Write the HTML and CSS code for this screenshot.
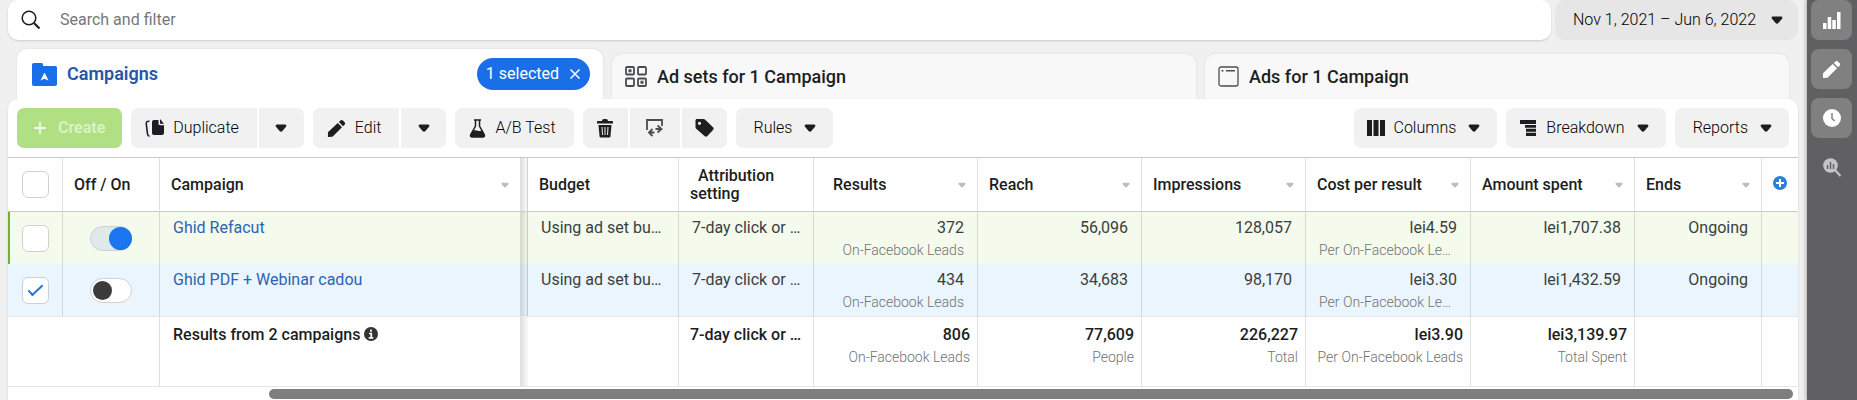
FILE: index.html
```
<!DOCTYPE html>
<html lang="en">
<head>
  <meta charset="UTF-8">
  <meta name="viewport" content="width=device-width, initial-scale=1.0">
  <title>Ads Manager - Campaigns</title>
  <link rel="stylesheet" href="styles.css">
</head>
<body>
  <!-- shared icons -->
  <svg class="sprite" aria-hidden="true">
    <symbol id="caret" viewBox="0 0 12 8"><path d="M2 0.5h8c1.3 0 1.8 1.2 1 2.2L7.4 7c-.8.9-2 .9-2.8 0L1 2.700C.2 1.700.7.5 2 .5z"/></symbol>
    <symbol id="pencil" viewBox="0 0 20 20"><path d="M1 19v-4.300c0-.5.2-.9.5-1.200L11.300 4.300l4.500 4.500-9.500 9.400c-.4.400-.8.600-1.300.6zM12.500 3.200l1.600-1.600c.8-.8 1.900-.8 2.700 0l1.700 1.700c.8.8.8 1.900 0 2.700l-1.600 1.600z"/></symbol>
  </svg>

  <div class="main">
    <div class="topbar">
      <label class="search">
        <svg width="20" height="20" viewBox="0 0 20 20" fill="none" stroke="#1c1e21" stroke-width="1.500"><circle cx="8" cy="8" r="6.800"/><path d="M13 13l5.500 5.500" stroke-width="2.200"/></svg>
        <input type="text" placeholder="Search and filter" aria-label="Search and filter">
      </label>
      <button class="date">Nov 1, 2021 – Jun 6, 2022 <svg class="caret"><use href="#caret"/></svg></button>
    </div>

    <div class="tabs">
      <div class="tab active">
        <svg width="25" height="23" viewBox="0 0 25 23"><path d="M2 0h7c1.500 0 2 .5 2 1.500V3h12c1.300 0 2 .7 2 2v16c0 1.300-.7 2-2 2H2c-1.300 0-2-.7-2-2V2C0 .7.700 0 2 0z" fill="#1a6fe8"/><path d="M12.500 9.500l4 8-4-1.700-4 1.700z" fill="#fff"/></svg>
        <a href="#campaigns">Campaigns</a>
        <button class="pill">1 selected <svg width="10" height="10" viewBox="0 0 10 10" stroke="#fff" stroke-width="1.500"><path d="M.5.5l9 9M9.500.5l-9 9"/></svg></button>
      </div>
      <div class="tab">
        <svg width="22" height="21" viewBox="0 0 22 21" fill="none" stroke="#4b4c4f" stroke-width="1.800"><rect x="1" y="1" width="8" height="7.500" rx="1"/><rect x="13" y="1" width="8" height="7.500" rx="1"/><rect x="1" y="12.500" width="8" height="7.500" rx="1"/><rect x="13" y="12.500" width="8" height="7.500" rx="1"/><path d="M3.500 4.800h3M15.500 16.300h3" stroke-width="3"/></svg>
        <a href="#adsets">Ad sets for 1 Campaign</a>
      </div>
      <div class="tab">
        <svg width="21" height="21" viewBox="0 0 21 21" fill="none" stroke="#4b4c4f" stroke-width="1.300"><rect x="1" y="1" width="19" height="19" rx="2"/><path d="M3.500 4.800h2M8 4.800h9" stroke-width="1.500"/></svg>
        <a href="#ads">Ads for 1 Campaign</a>
      </div>
    </div>

    <div class="panel">
      <div class="toolbar">
        <button class="create"><svg width="12" height="12" viewBox="0 0 12 12" stroke="#f0fae4" stroke-width="1.800"><path d="M6 0v12M0 6h12"/></svg>Create</button>
        <div class="group">
          <button class="btn">
            <svg width="19" height="18" viewBox="0 0 19 18"><path d="M9 1h4.500v3.500c0 1.200.5 1.700 1.700 1.700H19V14c0 1.200-.8 2-2 2H9c-1.200 0-2-.8-2-2V3c0-1.200.8-2 2-2zM15 0l4 4.700h-4z"/><path d="M4.500 2.200C2 2 1 3 1.300 5l1.200 10c.1 1.300.7 2 2 2.200" fill="none" stroke="#1c1e21" stroke-width="1.600"/></svg>
            Duplicate
          </button>
          <button class="btn only-icon" aria-label="More duplicate options"><svg class="caret"><use href="#caret"/></svg></button>
        </div>
        <div class="group">
          <button class="btn"><svg width="19" height="19"><use href="#pencil"/></svg>Edit</button>
          <button class="btn only-icon" aria-label="More edit options"><svg class="caret"><use href="#caret"/></svg></button>
        </div>
        <button class="btn">
          <svg width="17" height="19" viewBox="0 0 17 19"><path d="M5 1h7M6.500 1v6L1.800 15.500c-.6 1.400 0 2.500 1.400 2.500h10.600c1.400 0 2-1.100 1.400-2.500L10.500 7V1" fill="none" stroke="#1c1e21" stroke-width="1.500"/><path d="M4 11.500c3-1 4 1.500 9 0l3 5c0 1-.6 1.500-1.500 1.500h-12C1 18 1 17 1.400 16z"/></svg>
          A/B Test
        </button>
        <div class="group">
          <button class="btn only-icon" aria-label="Delete"><svg width="16" height="19" viewBox="0 0 16 19"><path d="M5 2c0-1.200.8-2 2-2h2c1.200 0 2 .8 2 2h4c.6 0 1 .4 1 1v1.500H0V3c0-.6.400-1 1-1z"/><path d="M1.500 6h13L13.500 17c-.1 1-.7 1.500-1.700 1.500H4.200c-1 0-1.600-.5-1.700-1.500z"/><path d="M5 8l.5 8M8 8v8M11 8l-.5 8" stroke="#f1f1f1" stroke-width="1"/></svg></button>
          <button class="btn only-icon wide" aria-label="Revert"><svg width="17" height="18" viewBox="0 0 17 18" fill="none" stroke="#4b4c4f" stroke-width="1.800"><path d="M1 11V1h15v6M11.500 6.500L15.500 10l-4 3.500M14.500 10H9.500M6.500 10L3 13.500 6.500 17M3.500 13.500h5"/></svg></button>
          <button class="btn only-icon" aria-label="Tag"><svg width="19" height="18" viewBox="0 0 19 18"><path fill-rule="evenodd" d="M2 0h6.500c.7 0 1.200.2 1.700.7l7.800 7.600c.9.900.9 1.900 0 2.800l-5.600 5.900c-.9.900-2 .9-2.900 0L1.200 9.700C.8 9.200.5 8.700.5 8V1.500C.5.600 1.100 0 2 0zM4.500 2.700a1.600 1.600 0 1 0 0 3.200 1.600 1.600 0 0 0 0-3.200z"/></svg></button>
        </div>
        <button class="btn menu">Rules <svg class="caret"><use href="#caret"/></svg></button>

        <div class="right">
          <button class="btn"><svg width="18" height="16" viewBox="0 0 18 16"><path d="M0 0h5v16H0zM6.500 0h5v16h-5zM13 0h5v16h-5z"/></svg>Columns <svg class="caret"><use href="#caret"/></svg></button>
          <button class="btn"><svg width="18" height="16" viewBox="0 0 18 16"><path d="M1 0h16v4H1zM6 5h11v2.700H6zM7 8.700h10v3H7zM7 12.700h10V16H7z"/></svg>Breakdown <svg class="caret"><use href="#caret"/></svg></button>
          <button class="btn menu">Reports <svg class="caret"><use href="#caret"/></svg></button>
        </div>
      </div>

      <table>
        <colgroup>
          <col class="c-check"><col class="c-toggle"><col><col class="c-gutter"><col class="c-budget"><col class="c-attr">
          <col class="c-num"><col class="c-num"><col class="c-num"><col class="c-cost"><col class="c-num"><col class="c-ends"><col class="c-add">
        </colgroup>
        <thead>
          <tr>
            <th><input type="checkbox" class="check" aria-label="Select all"></th>
            <th>Off / On</th>
            <th><div class="head">Campaign <svg><use href="#caret"/></svg></div></th>
            <th class="gutter"></th>
            <th>Budget</th>
            <th class="indent">Attribution setting</th>
            <th class="indent"><div class="head">Results <svg><use href="#caret"/></svg></div></th>
            <th><div class="head">Reach <svg><use href="#caret"/></svg></div></th>
            <th><div class="head">Impressions <svg><use href="#caret"/></svg></div></th>
            <th><div class="head">Cost per result <svg><use href="#caret"/></svg></div></th>
            <th><div class="head">Amount spent <svg><use href="#caret"/></svg></div></th>
            <th><div class="head">Ends <svg><use href="#caret"/></svg></div></th>
            <th class="add"><button aria-label="Add column"><svg width="14" height="14" viewBox="0 0 14 14"><circle cx="7" cy="7" r="7" fill="#2d7fd8"/><path d="M7 3v8M3 7h8" stroke="#fff" stroke-width="2"/></svg></button></th>
          </tr>
        </thead>
        <tbody>
          <tr class="green">
            <td class="mid"><input type="checkbox" class="check" aria-label="Select Ghid Refacut"></td>
            <td class="mid"><input type="checkbox" role="switch" class="toggle" checked aria-label="Ghid Refacut on"></td>
            <td><a href="#refacut">Ghid Refacut</a></td>
            <td class="gutter"></td>
            <td>Using ad set bu…</td>
            <td>7-day click or …</td>
            <td class="num">372<small>On-Facebook Leads</small></td>
            <td class="num">56,096</td>
            <td class="num">128,057</td>
            <td class="num">lei4.59<small class="cut">Per On-Facebook Le…</small></td>
            <td class="num">lei1,707.38</td>
            <td class="num">Ongoing</td>
            <td></td>
          </tr>
          <tr class="blue">
            <td class="mid"><input type="checkbox" class="check" checked aria-label="Select Ghid PDF + Webinar cadou"></td>
            <td class="mid"><input type="checkbox" role="switch" class="toggle" aria-label="Ghid PDF + Webinar cadou on"></td>
            <td><a href="#webinar">Ghid PDF + Webinar cadou</a></td>
            <td class="gutter"></td>
            <td>Using ad set bu…</td>
            <td>7-day click or …</td>
            <td class="num">434<small>On-Facebook Leads</small></td>
            <td class="num">34,683</td>
            <td class="num">98,170</td>
            <td class="num">lei3.30<small class="cut">Per On-Facebook Le…</small></td>
            <td class="num">lei1,432.59</td>
            <td class="num">Ongoing</td>
            <td></td>
          </tr>
        </tbody>
        <tfoot>
          <tr>
            <td colspan="2"></td>
            <td class="total-name">Results from 2 campaigns <svg width="14" height="14" viewBox="0 0 14 14"><circle cx="7" cy="7" r="7" fill="#333"/><path d="M7 2.500v2.300M5 6.500h2.300v4M4.700 10.800h4.600" stroke="#fff" stroke-width="1.700" fill="none"/></svg></td>
            <td class="gutter"></td>
            <td></td>
            <td>7-day click or …</td>
            <td class="num">806<small>On-Facebook Leads</small></td>
            <td class="num">77,609<small>People</small></td>
            <td class="num">226,227<small>Total</small></td>
            <td class="num">lei3.90<small>Per On-Facebook Leads</small></td>
            <td class="num">lei3,139.97<small>Total Spent</small></td>
            <td></td>
            <td></td>
          </tr>
        </tfoot>
      </table>
      <div class="scroll"></div>
    </div>
  </div>

  <div class="sidebar">
    <button aria-label="Charts"><svg width="18" height="17" viewBox="0 0 18 17"><path d="M0 11h3.500v6H0zM4.700 5h3.500v12H4.700zM9.300 8h3.500v9H9.300zM14 0h3.500v17H14z"/></svg></button>
    <button aria-label="Edit"><svg width="19" height="19"><use href="#pencil"/></svg></button>
    <button aria-label="History"><svg width="18" height="18" viewBox="0 0 18 18"><circle cx="9" cy="9" r="9"/><path d="M9 4v5.500l2.500 2.500" fill="none" stroke="#808080" stroke-width="1.500"/></svg></button>
    <button class="plain" aria-label="Inspect"><svg width="18" height="19" viewBox="0 0 18 19"><circle cx="7.500" cy="7.500" r="7.300"/><path d="M12 12l5.500 6" stroke="#c4c4c6" stroke-width="2.200"/><path d="M4.500 7v4M7.500 4v7M10.500 6v5" stroke="#606062" stroke-width="1.400"/></svg></button>
  </div>
</body>
</html>
```
FILE: styles.css
```
* {
  box-sizing: border-box;
}

body {
  margin: 0;
  min-height: 100vh;
  display: flex;
  background: #f0f0f0;
  font-family: Roboto, "Liberation Sans", sans-serif;
  font-size: 16px;
  line-height: 20px;
  color: #1c1e21;
}

button, input {
  font: inherit;
  color: inherit;
  margin: 0;
}

button {
  border: none;
  padding: 0;
  cursor: pointer;
}

a {
  text-decoration: none;
}

svg {
  flex: none;
}

.sprite {
  position: absolute;
  width: 0;
  height: 0;
}

.caret {
  width: 12px;
  height: 8px;
  margin-left: 3px;
}

.main {
  flex: 1;
  min-width: 0;
  display: flex;
  flex-direction: column;
  padding: 0 9px 0 8px;
}

/* search + date */
.topbar {
  display: flex;
  gap: 4px;
  height: 40px;
}

.search {
  flex: 1;
  display: flex;
  align-items: center;
  gap: 19px;
  padding: 0 13px;
  background: #fff;
  border-radius: 10px;
  box-shadow: 0 1px 2px rgba(0, 0, 0, 0.15);
}

.search input {
  flex: 1;
  border: none;
  outline: none;
  padding: 0;
  background: none;
}

.search input::placeholder {
  color: #75777a;
  opacity: 1;
}

.date {
  display: flex;
  align-items: center;
  justify-content: space-between;
  width: 243px;
  padding: 0 15px 0 18px;
  background: #e6e6e6;
  border-radius: 10px;
  color: #000;
  fill: #1c1e21;
  font-weight: 300;
}

/* tabs */
.tabs {
  display: flex;
  align-items: flex-end;
  gap: 9px;
  padding: 9px 9px 0;
}

.tab {
  flex: 1;
  display: flex;
  align-items: center;
  gap: 10px;
  height: 45px;
  padding: 0 13px;
  background: #f8f8f8;
  border-radius: 10px 10px 0 0;
  box-shadow: 0 0 2px rgba(0, 0, 0, 0.12);
  font-size: 18px;
  font-weight: 500;
}

.tab a {
  color: inherit;
}

.tab.active {
  height: 50px;
  background: #fff;
  color: #2457a8;
  padding-left: 15px;
  font-weight: 600;
}

.pill {
  display: flex;
  align-items: center;
  gap: 11px;
  height: 32px;
  margin-left: auto;
  padding: 0 10px 0 9px;
  background: #1a6fe8;
  color: #fff;
  border-radius: 16px;
  font-size: 16px;
  font-weight: 400;
}

/* white panel */
.panel {
  flex: 1;
  background: #fff;
  border-radius: 10px 10px 0 0;
  box-shadow: 0 1px 2px rgba(0, 0, 0, 0.15);
}

.toolbar {
  display: flex;
  gap: 9px;
  padding: 9px;
}

.group {
  display: flex;
  gap: 2px;
}

.right {
  display: flex;
  gap: 9px;
  margin-left: auto;
}

.create, .btn {
  display: flex;
  align-items: center;
  gap: 9px;
  height: 40px;
  padding: 0 18px 0 14px;
  border-radius: 7px;
  background: #f1f1f1;
  color: #000;
  fill: #1c1e21;
  font-weight: 300;
  white-space: nowrap;
}

.create {
  gap: 12px;
  padding: 0 17px;
  background: #b0e083;
  color: #dcf3c5;
  font-weight: 600;
}

.right .btn {
  padding: 0 17px 0 13px;
}

.toolbar .menu {
  padding: 0 17px 0 18px;
}

.btn.only-icon {
  justify-content: center;
  width: 45px;
  padding: 0;
}

.btn.only-icon.wide {
  width: 50px;
}

.only-icon .caret {
  margin: 0;
}

.group .btn {
  border-radius: 0;
}

.group .btn:first-child {
  border-radius: 7px 0 0 7px;
}

.group .btn:last-child {
  border-radius: 0 7px 7px 0;
}

/* table */
table {
  width: 100%;
  table-layout: fixed;
  border-collapse: separate;
  border-spacing: 0;
  border-top: 1px solid #c8c8c8;
}

.c-check { width: 55px; }
.c-toggle { width: 97px; }
.c-gutter { width: 7px; }
.c-budget { width: 151px; }
.c-attr { width: 135px; }
.c-num { width: 164px; }
.c-cost { width: 165px; }
.c-ends { width: 127px; }
.c-add { width: 36px; }

th, td {
  border-right: 1px solid rgba(0, 0, 0, 0.12);
  text-align: left;
  white-space: nowrap;
}

th:last-child, td:last-child {
  border-right: none;
}

th {
  height: 54px;
  padding: 0 11px;
  border-bottom: 1px solid #c8c8c8;
  font-weight: 500;
  line-height: 18px;
  white-space: normal;
}

th:first-child {
  text-align: center;
}

th.indent {
  text-indent: 8px;
}

.head {
  display: flex;
  align-items: center;
  justify-content: space-between;
  white-space: nowrap;
}

.head svg {
  width: 8px;
  height: 6px;
  fill: #bdbdbd;
}

th.add {
  padding: 0;
  text-align: center;
}

.add button {
  background: none;
}

td {
  height: 52px;
  padding: 6px 13px 0;
  vertical-align: top;
  color: #3b3e40;
}

td a {
  color: #2c63b5;
}

td.num {
  text-align: right;
}

td.mid {
  padding: 0;
  vertical-align: middle;
  text-align: center;
}

th.gutter, td.gutter {
  padding: 0;
  border-right-color: rgba(0, 0, 0, 0.08);
  background: linear-gradient(to right, rgba(0, 0, 0, 0.12), rgba(0, 0, 0, 0.02));
}

small {
  display: block;
  margin-top: 2px;
  font-size: 14px;
  font-weight: 300;
  color: #6f7274;
}

small.cut {
  text-align: left;
}

.green {
  background: #f4faec;
}

.green td:first-child {
  box-shadow: inset 2px 0 #6cb52d;
}

.blue {
  background: #ebf5fe;
}

tfoot td {
  height: 71px;
  padding: 8px 7px 0 11px;
  border-top: 1px solid #e4e6e8;
  border-bottom: 1px solid #e4e6e8;
  color: #1c1e21;
  font-weight: 500;
}

tfoot td.gutter {
  border-right: none;
}

td.total-name {
  padding-left: 13px;
}

.total-name svg {
  vertical-align: -1px;
}

/* checkboxes and switches */
.check, .toggle {
  appearance: none;
  display: inline-block;
  vertical-align: middle;
  background: #fff;
  border: 1px solid #ced0d4;
}

.check {
  width: 27px;
  height: 27px;
  border-radius: 6px;
}

.check:checked::before {
  content: "";
  display: block;
  width: 5px;
  height: 13px;
  margin: 3px 0 0 9px;
  border: solid #2374e1;
  border-width: 0 2px 2px 0;
  transform: rotate(47deg);
}

.toggle {
  width: 42px;
  height: 25px;
  border-radius: 13px;
}

.toggle::before {
  content: "";
  display: block;
  width: 19px;
  height: 19px;
  margin: 2px;
  border-radius: 50%;
  background: #3b3b3b;
}

.toggle:checked {
  background: #deeaea;
}

.toggle:checked::before {
  width: 23px;
  height: 23px;
  margin: 0 0 0 18px;
  background: #1b74f0;
}

.scroll {
  height: 10px;
  margin: 2px 5px 1px 261px;
  border-radius: 5px;
  background: #7e7e7e;
}

/* dark strip on the right */
.sidebar {
  width: 50px;
  display: flex;
  flex-direction: column;
  gap: 9px;
  padding: 0 5px 0 4px;
  background: #606062;
  box-shadow: 0 0 5px rgba(0, 0, 0, 0.4);
}

.sidebar button {
  display: flex;
  align-items: center;
  justify-content: center;
  height: 40px;
  border-radius: 8px;
  background: #808080;
  fill: #fff;
}

.sidebar .plain {
  background: none;
  fill: #c4c4c6;
}
```
